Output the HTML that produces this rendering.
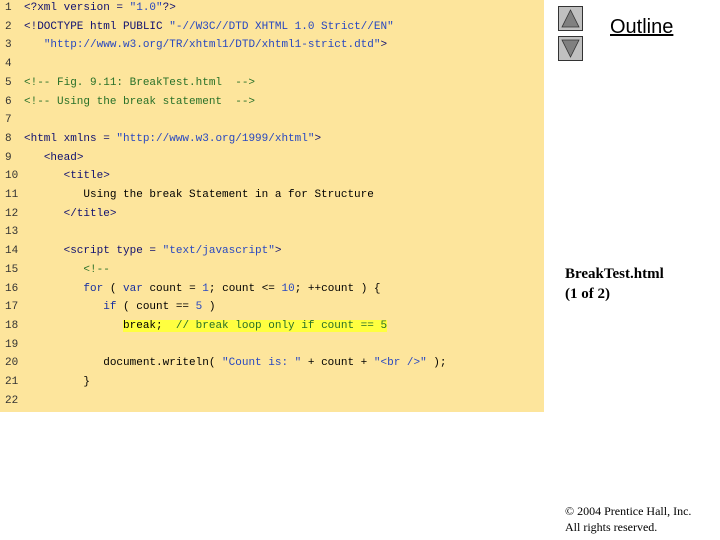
<!DOCTYPE html>
<html><head><style>
body{margin:0;width:720px;height:540px;background:#fff;position:relative;overflow:hidden}
#code{position:absolute;left:0;top:0;width:544px;height:412px;background:#fde59c}
pre{position:absolute;left:0;top:-1px;margin:0;font:11px/18.7px "Liberation Mono",monospace;color:#000;}
.n{display:inline-block;width:24px;padding-left:5px;box-sizing:border-box;color:#333}
.t{color:#101070}.s{color:#2848c0}.c{color:#287028}.k{color:#1830a0}
.hl{background:#ffff40}
.btn{position:absolute;left:558px;width:23px;height:23px;background:#c0c0c0;border:1px solid #333}
#o{position:absolute;left:610px;top:16px;font:20px "Liberation Sans",sans-serif;text-decoration:underline}
.r{position:absolute;left:565px;font-family:"Liberation Serif",serif}
</style></head><body>
<div id="code"><pre><span class="n">1</span><span class="t">&lt;?xml version = </span><span class="s">"1.0"</span><span class="t">?&gt;</span>
<span class="n">2</span><span class="t">&lt;!DOCTYPE html PUBLIC </span><span class="s">"-//W3C//DTD XHTML 1.0 Strict//EN"</span>
<span class="n">3</span>   <span class="s">"http://www.w3.org/TR/xhtml1/DTD/xhtml1-strict.dtd"</span><span class="t">&gt;</span>
<span class="n">4</span>
<span class="n">5</span><span class="c">&lt;!-- Fig. 9.11: BreakTest.html  --&gt;</span>
<span class="n">6</span><span class="c">&lt;!-- Using the break statement  --&gt;</span>
<span class="n">7</span>
<span class="n">8</span><span class="t">&lt;html xmlns = </span><span class="s">"http://www.w3.org/1999/xhtml"</span><span class="t">&gt;</span>
<span class="n">9</span>   <span class="t">&lt;head&gt;</span>
<span class="n">10</span>      <span class="t">&lt;title&gt;</span>
<span class="n">11</span>         Using the break Statement in a for Structure
<span class="n">12</span>      <span class="t">&lt;/title&gt;</span>
<span class="n">13</span>
<span class="n">14</span>      <span class="t">&lt;script type = </span><span class="s">"text/javascript"</span><span class="t">&gt;</span>
<span class="n">15</span>         <span class="c">&lt;!--</span>
<span class="n">16</span>         <span class="k">for</span> ( <span class="k">var</span> count = <span class="s">1</span>; count &lt;= <span class="s">10</span>; ++count ) {
<span class="n">17</span>            <span class="k">if</span> ( count == <span class="s">5</span> )
<span class="n">18</span>               <span class="hl">break;  <span class="c">// break loop only if count == 5</span></span>
<span class="n">19</span>
<span class="n">20</span>            document.writeln( <span class="s">"Count is: "</span> + count + <span class="s">"&lt;br /&gt;"</span> );
<span class="n">21</span>         }
<span class="n">22</span>
</pre></div>
<div class="btn" style="top:6px"><svg width="23" height="23"><polygon points="11.5,3 20,20 3,20" fill="#808080" stroke="#333" stroke-width="0.8"/></svg></div>
<div class="btn" style="top:36px"><svg width="23" height="23"><polygon points="3,3 20,3 11.5,20" fill="#808080" stroke="#333" stroke-width="0.8"/></svg></div>
<div id="o">Outline</div>
<div class="r" style="top:264px;font-size:15px;font-weight:bold;line-height:20px">BreakTest.html<br>(1 of 2)</div>
<div class="r" style="top:503px;font-size:12px;line-height:16px">© 2004 Prentice Hall, Inc.<br>All rights reserved.</div>
</body></html>
